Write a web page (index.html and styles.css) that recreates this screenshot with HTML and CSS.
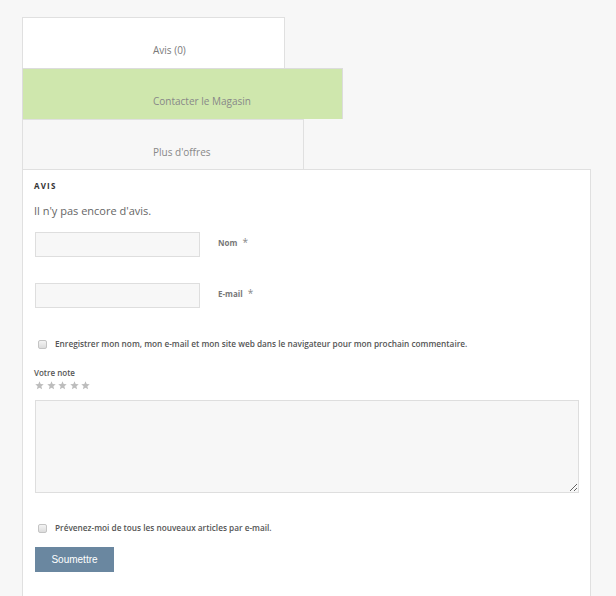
FILE: index.html
```html
<!DOCTYPE html>
<html lang="fr">
<head>
<meta charset="utf-8">
<title>Avis</title>
<link rel="stylesheet" href="styles.css">
</head>
<body>
<div class="wrap">
  <div class="tabs">
    <div class="tab tab-reviews">Avis (0)</div>
    <div class="tab tab-contact">Contacter le Magasin</div>
    <div class="tab tab-more">Plus d'offres</div>
  </div>
  <div class="panel">
    <h2 class="panel-title">AVIS</h2>
    <p class="empty">Il n'y pas encore d'avis.</p>
    <form class="form">
      <div class="field">
        <input class="text-input" type="text">
        <label class="field-label">Nom <span class="req">*</span></label>
      </div>
      <div class="field field-email">
        <input class="text-input" type="text">
        <label class="field-label">E-mail <span class="req">*</span></label>
      </div>
      <div class="check-row check-cookies">
        <input class="check" type="checkbox">
        <span class="check-label">Enregistrer mon nom, mon e-mail et mon site web dans le navigateur pour mon prochain commentaire.</span>
      </div>
      <div class="rating">
        <div class="rating-label">Votre note</div>
        <div class="stars">
          <svg class="star" viewBox="0 0 10 10"><polygon points="5,0.3 6.3,3.4 9.7,3.6 7.1,5.8 7.9,9.2 5,7.4 2.1,9.2 2.9,5.8 0.3,3.6 3.7,3.4"/></svg>
          <svg class="star" viewBox="0 0 10 10"><polygon points="5,0.3 6.3,3.4 9.7,3.6 7.1,5.8 7.9,9.2 5,7.4 2.1,9.2 2.9,5.8 0.3,3.6 3.7,3.4"/></svg>
          <svg class="star" viewBox="0 0 10 10"><polygon points="5,0.3 6.3,3.4 9.7,3.6 7.1,5.8 7.9,9.2 5,7.4 2.1,9.2 2.9,5.8 0.3,3.6 3.7,3.4"/></svg>
          <svg class="star" viewBox="0 0 10 10"><polygon points="5,0.3 6.3,3.4 9.7,3.6 7.1,5.8 7.9,9.2 5,7.4 2.1,9.2 2.9,5.8 0.3,3.6 3.7,3.4"/></svg>
          <svg class="star" viewBox="0 0 10 10"><polygon points="5,0.3 6.3,3.4 9.7,3.6 7.1,5.8 7.9,9.2 5,7.4 2.1,9.2 2.9,5.8 0.3,3.6 3.7,3.4"/></svg>
        </div>
      </div>
      <textarea class="comment"></textarea>
      <div class="check-row check-notify">
        <input class="check" type="checkbox">
        <span class="check-label">Prévenez-moi de tous les nouveaux articles par e-mail.</span>
      </div>
      <button class="submit" type="button">Soumettre</button>
    </form>
  </div>
</div>
</body>
</html>
```

FILE: styles.css
```css
* { box-sizing: border-box; }

html, body {
  margin: 0;
  padding: 0;
  background: #f7f7f7;
  font-family: "Open Sans", "DejaVu Sans", sans-serif;
  color: #555;
}

.wrap {
  padding: 17px 0 0 22px;
  width: 591px;
}

.tabs {
  display: flex;
  flex-direction: column;
  align-items: flex-start;
}

.tab {
  font-size: 10px;
  line-height: 14px;
  color: #7a7a7a;
  padding: 25px 0 0 130px;
  border: 1px solid #e0e0e0;
  border-bottom: none;
}

.tab-reviews {
  width: 263px;
  height: 51px;
  background: #fff;
}

.tab-contact {
  width: 321px;
  height: 51px;
  background: #cfe7ad;
  border-color: #dcdcdc;
  color: #888;
}

.tab-more {
  width: 282px;
  height: 50px;
  background: #f7f7f7;
  color: #888;
}

.panel {
  background: #fff;
  border: 1px solid #e0e0e0;
  border-bottom: none;
  padding: 10px 12px 24px 11px;
  min-height: 430px;
}

.panel-title {
  margin: 0;
  font-size: 8px;
  line-height: 12px;
  font-weight: 700;
  letter-spacing: 1.2px;
  color: #333;
}

.empty {
  margin: 11px 0 0 0;
  font-size: 11px;
  line-height: 16px;
  color: #666;
}

.form {
  display: flex;
  flex-direction: column;
  align-items: flex-start;
  margin-top: 13px;
}

.field {
  display: flex;
  align-items: flex-start;
  gap: 18px;
  padding-left: 1px;
}

.field-email {
  margin-top: 26px;
}

.text-input {
  width: 165px;
  height: 25px;
  margin: 0;
  background: #f7f7f7;
  border: 1px solid #dedede;
  border-radius: 0;
  outline: none;
}

.field-label {
  margin-top: 4px;
  font-size: 8px;
  line-height: 12px;
  font-weight: 700;
  color: #777;
}

.req {
  margin-left: 3px;
  font-weight: 400;
  font-size: 10px;
  color: #888;
}

.check-row {
  display: flex;
  align-items: center;
  gap: 8px;
  padding-left: 4px;
}

.check-cookies {
  margin-top: 30px;
}

.check-notify {
  margin-top: 29px;
}

.check {
  appearance: none;
  -webkit-appearance: none;
  width: 9px;
  height: 9px;
  margin: 0;
  border: 1px solid #c4c4c4;
  border-radius: 2px;
  background: linear-gradient(#f4f4f4, #dcdcdc);
}

.check-label {
  font-size: 8.25px;
  line-height: 12px;
  font-weight: 600;
  color: #555;
}

.rating {
  margin-top: 17px;
}

.rating-label {
  font-size: 8px;
  line-height: 12px;
  font-weight: 600;
  color: #555;
}

.stars {
  display: flex;
  gap: 2.5px;
  margin-top: 2px;
  padding-left: 1px;
}

.star {
  width: 9px;
  height: 9px;
  fill: #bdbdbd;
}

.comment {
  display: block;
  width: 544px;
  height: 93px;
  margin: 10px 0 0 1px;
  background: #f7f7f7;
  border: 1px solid #dedede;
  border-radius: 0;
  resize: both;
  outline: none;
}

.submit {
  margin: 13px 0 0 1px;
  width: 79px;
  height: 25px;
  padding: 0;
  border: none;
  border-radius: 0;
  background: #6a87a0;
  color: #fff;
  font-family: "Liberation Sans", Arial, sans-serif;
  font-size: 10px;
}
```
